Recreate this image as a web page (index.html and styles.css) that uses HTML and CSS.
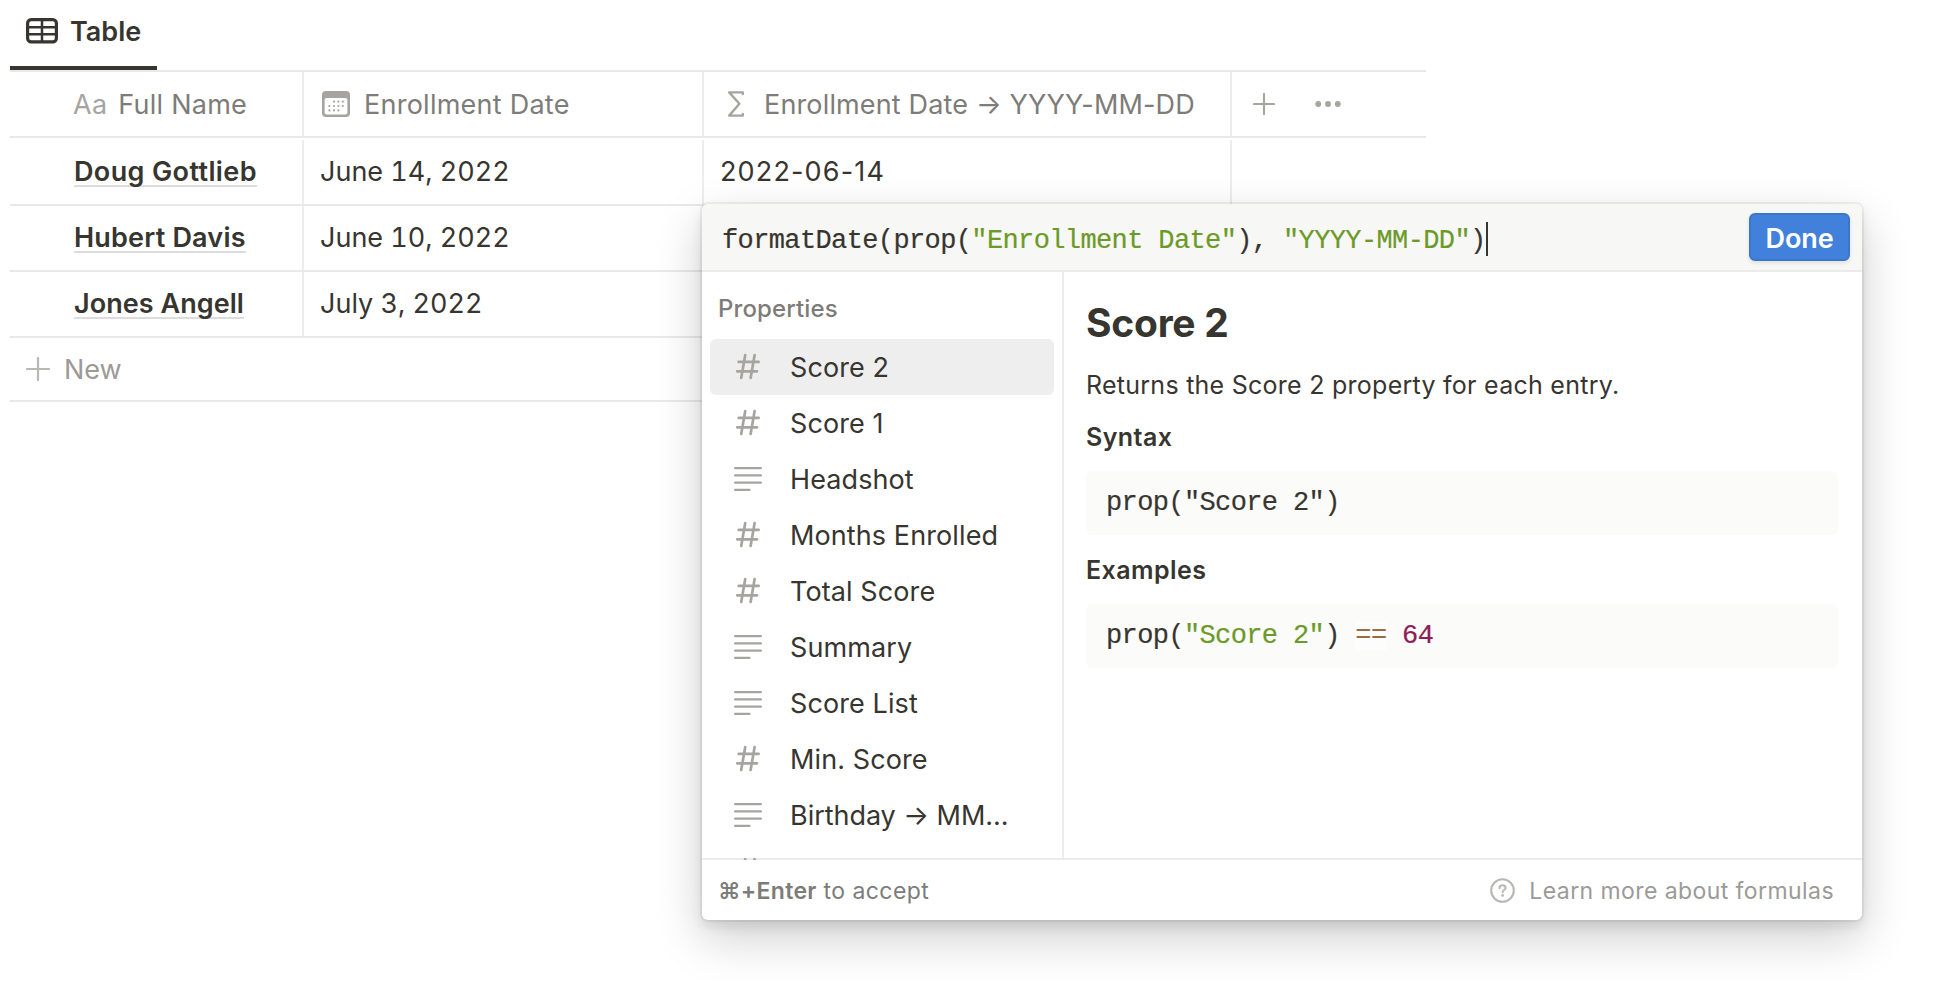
FILE: index.html
```html
<!DOCTYPE html>
<html lang="en">
<head>
<meta charset="utf-8">
<title>Table</title>
<link rel="stylesheet" href="styles.css">
</head>
<body>
<svg class="defs" width="0" height="0">
  <symbol id="i-num" viewBox="0 0 28 28"><path d="M11.2 2.2 7.2 25M20.6 2.2 16.6 25M4.7 8.9H24.6M3.2 18.3H23" fill="none" stroke="currentColor" stroke-width="2.7" stroke-linecap="round"/></symbol>
  <symbol id="i-text" viewBox="0 0 28 28"><path d="M1.1 3.1H26.9M1.1 10.4H26.9M1.1 17.6H26.9M1.1 24.9H15.4" fill="none" stroke="currentColor" stroke-width="2.3" stroke-linecap="round"/></symbol>
</svg>
<main class="database">
  <nav class="tabs">
    <div class="tab">
      <svg width="32" height="26" viewBox="0 0 32 26"><rect x="1.6" y="1.6" width="28.8" height="22.2" rx="3.6" fill="none" stroke="currentColor" stroke-width="3.2"/><path d="M2 9.3H30M2 16.3H30M16 2V24" stroke="currentColor" stroke-width="2.5"/></svg>
      <span>Table</span>
    </div>
  </nav>
  <div class="row head">
    <div class="cell name"><span class="aa">Aa</span><span>Full Name</span></div>
    <div class="cell date">
      <svg width="28" height="26" viewBox="0 0 28 26"><path fill-rule="evenodd" d="M4 0H24Q28 0 28 4V22Q28 26 24 26H4Q0 26 0 22V4Q0 0 4 0ZM4.6 7Q2.6 7 2.6 9V21.4Q2.6 23.4 4.6 23.4H23.4Q25.4 23.4 25.4 21.4V9Q25.4 7 23.4 7Z" fill="currentColor"/><path d="M12 10.6h0M16.4 10.6h0M20.8 10.6h0M7.4 15h0M12 15h0M16.4 15h0M20.8 15h0M7.4 19.4h0M12 19.4h0M16.4 19.4h0" stroke="currentColor" stroke-width="2.2" stroke-linecap="round"/></svg>
      <span>Enrollment Date</span></div>
    <div class="cell formula">
      <svg width="28" height="26" viewBox="0 0 28 26"><path d="M20.8 3V1.4H7.2L17.4 12.7 7.2 24.6H20.8V23" fill="none" stroke="currentColor" stroke-width="2.4" stroke-linecap="round" stroke-linejoin="round"/></svg>
      <span class="long">Enrollment Date → YYYY-MM-DD</span></div>
    <div class="cell tools">
      <svg width="22" height="22" viewBox="0 0 22 22"><path d="M11 1V21M1 11H21" stroke="currentColor" stroke-width="2.1" stroke-linecap="round"/></svg>
      <svg width="26" height="6" viewBox="0 0 26 6"><circle cx="3.2" cy="3" r="2.9"/><circle cx="13" cy="3" r="2.9"/><circle cx="22.8" cy="3" r="2.9"/></svg>
    </div>
  </div>
  <div class="row first">
    <div class="cell name"><span class="link wide">Doug Gottlieb</span></div>
    <div class="cell date"><span class="val">June 14, 2022</span></div>
    <div class="cell formula"><span class="val iso">2022-06-14</span></div>
    <div class="cell"></div>
  </div>
  <div class="row">
    <div class="cell name"><span class="link">Hubert Davis</span></div>
    <div class="cell date"><span class="val">June 10, 2022</span></div>
    <div class="cell formula"></div>
    <div class="cell"></div>
  </div>
  <div class="row">
    <div class="cell name"><span class="link tight">Jones Angell</span></div>
    <div class="cell date"><span class="val">July 3, 2022</span></div>
    <div class="cell formula"></div>
    <div class="cell"></div>
  </div>
  <div class="new">
    <svg width="24" height="24" viewBox="0 0 24 24"><path d="M12 1V23M1 12H23" stroke="currentColor" stroke-width="2.2" stroke-linecap="round"/></svg>
    <span>New</span>
  </div>
</main>

<section class="popup">
  <header class="editor">
    <code class="input"><span class="expr">formatDate(prop(<span class="str">"Enrollment Date"</span>), <span class="str">"YYYY-MM-DD"</span>)</span><i class="caret"></i></code>
    <button class="done"><span>Done</span></button>
  </header>
  <div class="body">
    <aside class="list">
      <div class="group">Properties</div>
      <div class="item on"><svg><use href="#i-num"/></svg><span>Score 2</span></div>
      <div class="item"><svg><use href="#i-num"/></svg><span>Score 1</span></div>
      <div class="item"><svg><use href="#i-text"/></svg><span>Headshot</span></div>
      <div class="item"><svg><use href="#i-num"/></svg><span>Months Enrolled</span></div>
      <div class="item"><svg><use href="#i-num"/></svg><span>Total Score</span></div>
      <div class="item"><svg><use href="#i-text"/></svg><span>Summary</span></div>
      <div class="item"><svg><use href="#i-text"/></svg><span>Score List</span></div>
      <div class="item"><svg><use href="#i-num"/></svg><span>Min. Score</span></div>
      <div class="item"><svg><use href="#i-text"/></svg><span class="cut">Birthday → MM...</span></div>
      <div class="item"><svg><use href="#i-num"/></svg></div>
    </aside>
    <article class="doc">
      <h1>Score 2</h1>
      <p>Returns the Score 2 property for each entry.</p>
      <h2>Syntax</h2>
      <pre>prop("Score 2")</pre>
      <h2>Examples</h2>
      <pre>prop(<span class="str">"Score 2"</span>) <span class="op">==</span> <span class="num">64</span></pre>
    </article>
  </div>
  <footer class="foot">
    <div class="hint"><b>⌘+Enter</b> to accept</div>
    <div class="learn">
      <svg width="25" height="25" viewBox="0 0 25 25"><circle cx="12.5" cy="12.5" r="11.3" fill="none" stroke="currentColor" stroke-width="2.1"/><path d="M9.4 10.2C9.4 8.3 10.8 7.3 12.5 7.3S15.6 8.3 15.6 9.9C15.6 12 12.6 12.1 12.6 14.2" fill="none" stroke="currentColor" stroke-width="2" stroke-linecap="round"/><circle cx="12.5" cy="17.4" r="1.4" fill="currentColor"/></svg>
      <span>Learn more about formulas</span>
    </div>
  </footer>
</section>
</body>
</html>
```
FILE: styles.css
```css
* { box-sizing: border-box; }
body {
  margin: 0;
  background: #fff;
  color: #37352f;
  font: 27px/40px Inter, "Liberation Sans", sans-serif;
  overflow: hidden;
}
.defs { position: absolute; }
svg { flex: none; display: block; }
.database { padding-left: 10px; width: 1426px; }
.tabs { height: 70px; display: flex; }
.tab {
  display: flex;
  gap: 12px;
  width: 147px;
  height: 70px;
  padding: 11px 0 0 16px;
  border-bottom: 4px solid #37352f;
  font-weight: 600;
  line-height: 41px;
}
.tab svg { margin-top: 7px; }
.row {
  display: grid;
  grid-template-columns: 294px 400px 528px 194px;
  height: 66px;
  border-bottom: 2px solid #e9e9e7;
}
.head { height: 68px; border-top: 2px solid #e9e9e7; color: #7d7c78; letter-spacing: .25px; }
.head svg { color: #a5a49f; fill: #a5a49f; }
.head span, .new span, .item span { padding-top: 1px; }
.long { letter-spacing: .15px; }
.first { height: 68px; padding-top: 2px; }
.cell { display: flex; align-items: center; border-right: 2px solid #ededeb; }
.cell:last-child { border-right: 0; }
.name { padding-left: 64px; }
.head .name { padding-left: 63px; gap: 11px; }
.head .aa { color: #a5a49f; }
.date, .formula { padding-left: 16px; }
.head .date, .head .formula { padding-left: 18px; gap: 14px; }
.val { padding-bottom: 1px; font-variant-numeric: tabular-nums; }
.iso { font-variant-numeric: normal; letter-spacing: 1.15px; }
.head .tools { padding-left: 21px; gap: 40px; }
.link { padding-top: 1px; font-weight: 600; letter-spacing: .2px; line-height: 27px; border-bottom: 2px solid #dcdcda; }
.wide { letter-spacing: .37px; }
.tight { letter-spacing: .05px; }
.new {
  display: flex;
  align-items: center;
  gap: 14px;
  height: 64px;
  padding-left: 16px;
  border-bottom: 2px solid #e9e9e7;
  color: #9b9a97;
}
.new svg { color: #b9b8b5; }

.popup {
  position: absolute;
  left: 702px;
  top: 204px;
  width: 1160px;
  height: 716px;
  display: flex;
  flex-direction: column;
  border-radius: 6px;
  background: #fff;
  box-shadow: 0 0 0 2px rgba(15,15,15,.05), 0 6px 12px rgba(15,15,15,.1), 0 18px 48px rgba(15,15,15,.2);
}
.editor {
  display: flex;
  align-items: center;
  justify-content: space-between;
  height: 68px;
  padding: 0 12px 0 20px;
  border-bottom: 2px solid #ebebea;
  border-radius: 6px 6px 0 0;
  background: #f7f7f5;
}
code, pre {
  font: 27px/40px "Liberation Mono", monospace;
  letter-spacing: -.62px;
  white-space: pre;
  -webkit-text-stroke: .2px currentColor;
}
.input { display: flex; align-items: center; padding-top: 4px; }
.expr { padding-top: 4px; }
.caret { width: 2px; height: 34px; background: #37352f; }
.str { color: #6c9a28; }
.op { color: #9a6e3a; background: rgba(255,255,255,.5); }
.num { color: #901c58; }
.done {
  width: 101px;
  height: 48px;
  padding: 0;
  border: 2px solid #3b76c8;
  border-radius: 6px;
  background: #4281db;
  color: #fff;
  font: 600 27px/40px Inter, sans-serif;
  letter-spacing: -.1px;
  box-shadow: 0 2px 4px rgba(15,15,15,.1);
}
.done span { display: block; padding-top: 3px; }
.body { display: flex; height: 588px; overflow: hidden; box-shadow: inset 0 -2px 0 #ebebea; }
.list { width: 362px; height: 588px; padding: 17px 8px 0; border-right: 2px solid #ededec; overflow: hidden; }
.group { height: 50px; padding-left: 8px; font-size: 24px; font-weight: 500; letter-spacing: .12px; color: #7d7c78; }
.item { display: flex; align-items: center; gap: 28px; height: 56px; padding-left: 24px; border-radius: 6px; letter-spacing: .1px; }
.item svg { width: 28px; height: 28px; color: #a5a49f; }
.cut { letter-spacing: -.04px; }
.on { background: #eee; }
.doc { flex: 1; padding: 26px 24px 0 22px; }
h1, h2, p, pre { margin: 0; }
h1 { font-size: 39px; line-height: 50px; font-weight: 700; letter-spacing: -.25px; }
p { font-size: 25px; margin-top: 17px; letter-spacing: .26px; }
h2 { font-size: 25px; font-weight: 600; line-height: 40px; margin-top: 12px; letter-spacing: .45px; }
pre { height: 64px; padding: 12px 20px; margin-top: 14px; border-radius: 6px; background: #fbfbfa; }
pre + h2 { margin-top: 15px; }
.foot {
  display: flex;
  align-items: center;
  justify-content: space-between;
  height: 60px;
  padding: 0 28px 0 16px;
  font-size: 23px;
  color: #7d7c78;
  letter-spacing: .42px;
}
.hint, .learn span { padding-top: 2px; }
.hint b { font-weight: 600; letter-spacing: .3px; }
.learn { display: flex; align-items: center; gap: 14px; color: #9b9a97; }
.learn svg { color: #b9b8b5; }
```
